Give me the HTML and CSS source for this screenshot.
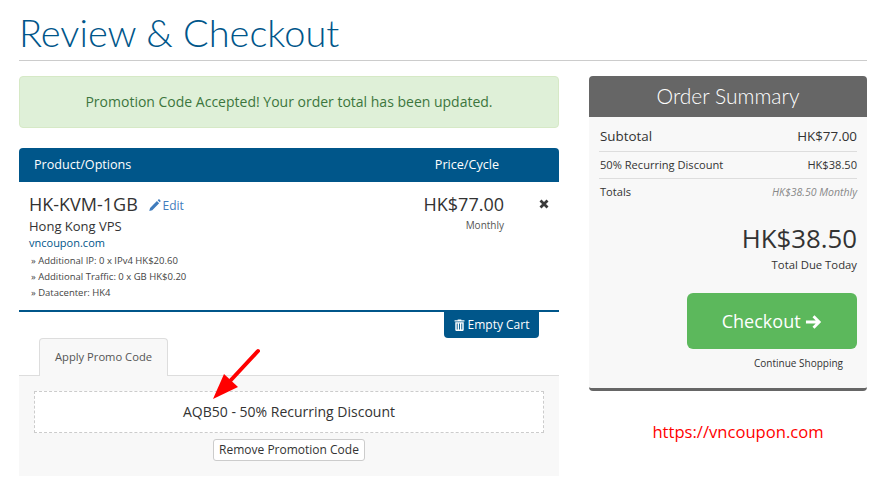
FILE: index.html
```html
<!doctype html>
<html lang="en">
<head>
	<meta charset="UTF-8">
	<title>Review &amp; Checkout</title>
	<link rel="stylesheet" href="styles.css">
</head>
<body>
	<div class="page">
		<h1 class="title">Review &amp; Checkout</h1>
		<div class="columns">
			<div class="main">
				<div class="alert">Promotion Code Accepted! Your order total has been updated.</div>
				<div class="cart-head">
					<span>Product/Options</span>
					<span class="cart-head-price">Price/Cycle</span>
				</div>
				<div class="cart-item">
					<div class="item-info">
						<div class="item-name">HK-KVM-1GB
							<a class="edit-link">
								<svg class="edit-icon" viewBox="0 0 14 14"><path d="M9.6 2.2l2.4 2.4-7.4 7.4-3.2.8.8-3.2zM10.4 1.4l.8-.8c.4-.3.9-.3 1.2 0l1 1c.3.3.3.8 0 1.2l-.8.8z" fill="#3f7cbd"/></svg>Edit</a>
						</div>
						<div class="item-group">Hong Kong VPS</div>
						<div class="item-domain">vncoupon.com</div>
						<div class="item-opt">» Additional IP: 0 x IPv4 HK$20.60</div>
						<div class="item-opt">» Additional Traffic: 0 x GB HK$0.20</div>
						<div class="item-opt">» Datacenter: HK4</div>
					</div>
					<div class="item-price">
						<div class="price-big">HK$77.00</div>
						<div class="price-cycle">Monthly</div>
					</div>
					<div class="item-remove">
						<svg class="remove-icon" viewBox="0 0 10 10"><path d="M1.5 1.5l7 7M8.5 1.5l-7 7" stroke="#3a3a3a" stroke-width="2.8"/></svg>
					</div>
				</div>
				<div class="cart-actions">
					<button class="empty-btn">
						<svg class="trash-icon" viewBox="0 0 12 13"><path d="M4 1.2V.4h4v.8h3.4v1.5H.6V1.2zM1.4 3.4h9.2v8.4c0 .7-.4 1.2-1 1.2H2.4c-.6 0-1-.5-1-1.2zM3 4.8v6.6h1V4.8zM5.5 4.8v6.6h1V4.8zM8 4.8v6.6h1V4.8z" fill="#fff" fill-rule="evenodd"/></svg>Empty Cart</button>
				</div>
				<div class="tabs">
					<div class="tab">Apply Promo Code</div>
				</div>
				<div class="promo">
					<div class="promo-code">AQB50 - 50% Recurring Discount</div>
					<button class="remove-btn">Remove Promotion Code</button>
					<svg class="arrow" viewBox="0 0 48 52"><path d="M45 3L18 32" stroke="#f00" stroke-width="4" stroke-linecap="round"/><path d="M0 51L11 26 25 39z" fill="#f00"/></svg>
				</div>
			</div>
			<div class="side">
				<div class="summary">
					<div class="summary-head">Order Summary</div>
					<div class="summary-body">
						<div class="sum-row sum-sub"><span>Subtotal</span><span>HK$77.00</span></div>
						<div class="sum-row sum-disc"><span>50% Recurring Discount</span><span>HK$38.50</span></div>
						<div class="sum-row sum-total"><span>Totals</span><span class="sum-cycle">HK$38.50 Monthly</span></div>
						<div class="due">HK$38.50</div>
						<div class="due-label">Total Due Today</div>
						<div class="checkout-wrap">
							<button class="checkout-btn">Checkout
								<svg class="checkout-arrow" viewBox="0 0 18 16"><path d="M1 8h14M9 2l6 6-6 6" fill="none" stroke="#fff" stroke-width="3"/></svg>
							</button>
							<div class="continue">Continue Shopping</div>
						</div>
					</div>
				</div>
				<div class="site-url">https://vncoupon.com</div>
			</div>
		</div>
	</div>
</body>
</html>
```

FILE: styles.css
```css
*{
	padding: 0;
	margin: 0;
	box-sizing: border-box;
	font-family: "Open Sans", sans-serif;
}
body{
	background-color: #fff;
	color: #333;
	overflow: hidden;
}
.page{
	padding: 0 27px 0 19px;
}
.title{
	height: 61px;
	padding-top: 9px;
	font-family: "Lato", sans-serif;
	font-size: 38px;
	line-height: 46px;
	font-weight: 300;
	color: #00568a;
	border-bottom: 1px solid #ccc;
}
.columns{
	display: flex;
	gap: 30px;
	margin-top: 15px;
}
.main{
	width: 540px;
}
.side{
	width: 278px;
}
/* left column */
.alert{
	height: 52px;
	line-height: 50px;
	text-align: center;
	font-size: 14px;
	color: #3c763d;
	background-color: #dff0d8;
	border: 1px solid #d6e9c6;
	border-radius: 4px;
	margin-bottom: 20px;
}
.cart-head{
	display: flex;
	justify-content: space-between;
	height: 34px;
	line-height: 33px;
	padding: 0 60px 0 15px;
	font-size: 12.6px;
	color: #fff;
	background-color: #00568a;
	border-radius: 4px 4px 0 0;
}
.cart-item{
	display: flex;
	height: 130px;
	padding: 10px 10px 0 10px;
	border-bottom: 2px solid #00568a;
}
.item-info{
	flex: 1;
}
.item-name{
	font-size: 18px;
	line-height: 24px;
}
.edit-link{
	margin-left: 5px;
	font-size: 12px;
	color: #3f7cbd;
	vertical-align: 1px;
}
.edit-icon{
	width: 13px;
	height: 13px;
	margin-right: 2px;
	vertical-align: -2px;
}
.item-group{
	font-size: 13px;
	line-height: 18px;
	margin-top: -1px;
}
.item-domain{
	font-size: 11px;
	line-height: 16px;
	margin-bottom: 2px;
	color: #00568a;
}
.item-opt{
	font-size: 9.5px;
	line-height: 16px;
	padding-left: 2px;
	color: #444;
}
.item-price{
	width: 120px;
	text-align: right;
}
.price-big{
	font-size: 18px;
	line-height: 24px;
}
.price-cycle{
	font-size: 10px;
	line-height: 16px;
	margin-top: 1px;
	color: #555;
}
.item-remove{
	width: 45px;
	text-align: right;
}
.remove-icon{
	width: 10px;
	height: 10px;
	margin-top: 3px;
}
.cart-actions{
	display: flex;
	justify-content: flex-end;
	padding-right: 20px;
}
.empty-btn{
	height: 26px;
	width: 95px;
	padding-bottom: 2px;
	border: none;
	border-radius: 0 0 4px 4px;
	background-color: #00568a;
	color: #fff;
	font-size: 12px;
}
.trash-icon{
	width: 11px;
	height: 12px;
	margin-right: 3px;
	vertical-align: -2px;
}
.tabs{
	display: flex;
	padding-left: 20px;
	height: 38px;
	border-bottom: 1px solid #ddd;
}
.tab{
	width: 129px;
	height: 38px;
	line-height: 36px;
	text-align: center;
	font-size: 11.2px;
	color: #555;
	background-color: #f8f8f8;
	border: 1px solid #ddd;
	border-bottom: none;
	border-radius: 4px 4px 0 0;
}
.promo{
	position: relative;
	display: flex;
	flex-direction: column;
	align-items: center;
	height: 100px;
	padding: 15px;
	background-color: #f8f8f8;
}
.promo-code{
	width: 100%;
	height: 42px;
	line-height: 40px;
	text-align: center;
	font-size: 14px;
	background-color: #fff;
	border: 1px dashed #ccc;
}
.remove-btn{
	height: 22px;
	margin-top: 6px;
	padding: 0 5px 1px;
	font-size: 12px;
	color: #333;
	background-color: #fff;
	border: 1px solid #ccc;
	border-radius: 3px;
}
.arrow{
	position: absolute;
	left: 194px;
	top: -28px;
	width: 48px;
	height: 52px;
}
/* right column */
.summary{
	background-color: #f8f8f8;
	border-bottom: 3px solid #666;
	border-radius: 4px;
	height: 315px;
}
.summary-head{
	height: 41px;
	line-height: 39px;
	text-align: center;
	font-family: "Lato", sans-serif;
	font-size: 21px;
	font-weight: 300;
	color: #fff;
	background-color: #666;
	border-radius: 4px 4px 0 0;
}
.summary-body{
	padding: 0 10px;
}
.sum-row{
	display: flex;
	justify-content: space-between;
	align-items: center;
	padding-left: 1px;
}
.sum-sub{
	height: 35px;
	padding-top: 3px;
	font-size: 13.4px;
	border-bottom: 1px solid #ddd;
}
.sum-disc{
	height: 27px;
	padding-bottom: 2px;
	font-size: 11.1px;
	border-bottom: 1px solid #ddd;
}
.sum-total{
	height: 27px;
	padding-bottom: 2px;
	font-size: 11.1px;
}
.sum-cycle{
	font-size: 10.5px;
	font-style: italic;
	color: #888;
}
.due{
	margin-top: 14px;
	text-align: right;
	font-size: 25.8px;
	line-height: 37px;
}
.due-label{
	text-align: right;
	font-size: 11.3px;
	line-height: 16px;
}
.checkout-wrap{
	width: 170px;
	margin: 20px 0 0 auto;
}
.checkout-btn{
	width: 170px;
	height: 56px;
	border: none;
	border-radius: 6px;
	background-color: #5cb85c;
	color: #fff;
	font-size: 18px;
}
.checkout-arrow{
	width: 17px;
	height: 16px;
	vertical-align: -2px;
}
.continue{
	text-align: right;
	padding-right: 14px;
	font-size: 10px;
	line-height: 16px;
	margin-top: 6px;
}
.site-url{
	margin-top: 30px;
	padding-left: 20px;
	text-align: center;
	font-size: 16.6px;
	line-height: 22px;
	color: #f00;
}
```
